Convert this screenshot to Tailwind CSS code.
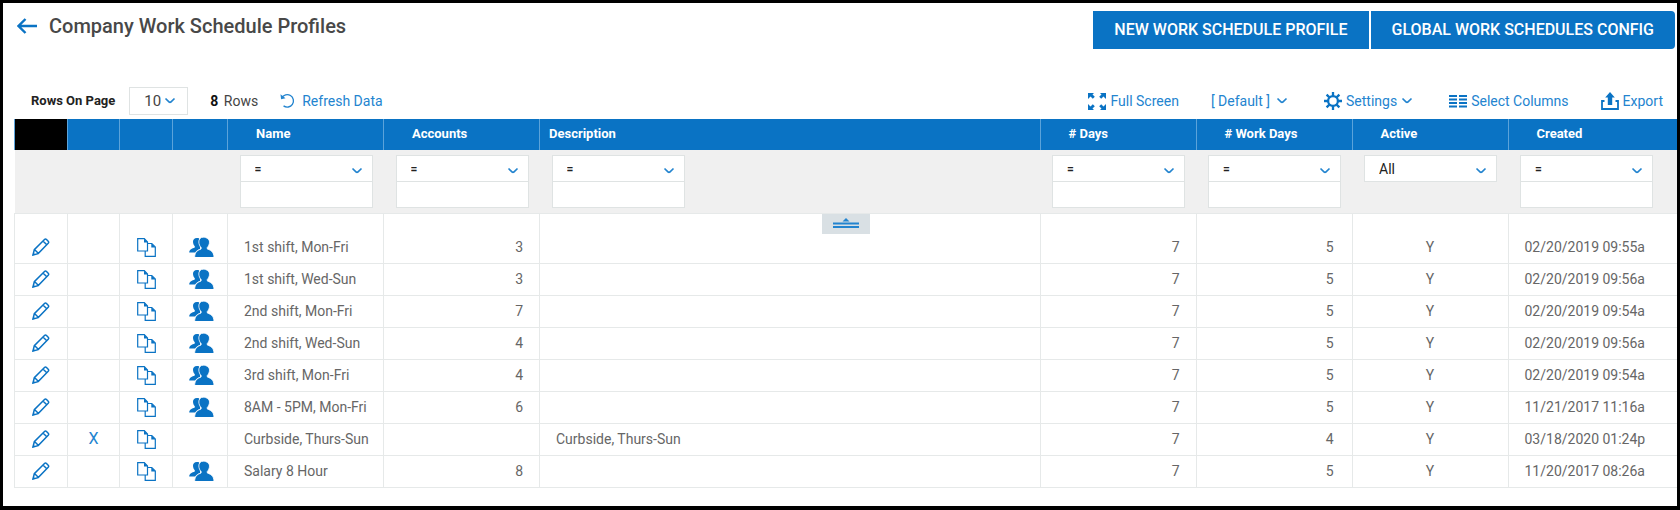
<!DOCTYPE html>
<html lang="en">

<head>
  <meta charset="UTF-8">
  <meta name="viewport" content="width=device-width, initial-scale=1.0">
  <title>Company Work Schedule Profiles</title>
  <script src="https://cdn.jsdelivr.net/npm/@tailwindcss/browser@4"></script>
</head>

<body class="bg-white font-[Roboto,sans-serif] text-sm text-[#666]">
  <!-- icon sprite -->
  <svg class="hidden" xmlns="http://www.w3.org/2000/svg">
    <symbol id="i-chevron" viewBox="0 0 12 8">
      <path d="M1.500 1.500 5.200 5q.8.600 1.600 0l3.700-3.500" fill="none" stroke="currentColor" stroke-width="1.700" />
    </symbol>
    <symbol id="i-back" viewBox="0 0 20 16">
      <path d="M20 8H2M8.500 1 1.500 8l7 7" fill="none" stroke="currentColor" stroke-width="2.400" />
    </symbol>
    <symbol id="i-refresh" viewBox="0 0 18 18">
      <path d="M2 5.500A7 7 0 1 1 4 14.500" fill="none" stroke="currentColor" stroke-width="1.500" />
      <path d="M.5 1.500 1.200 7l5-1.200z" fill="currentColor" />
    </symbol>
    <symbol id="i-expand" viewBox="0 0 18 18">
      <path d="M0 1h6L4.500 2.500 6.800 4.800 4.800 6.800 2.500 4.500 0 7zM18 1v6l-2.500-2.500-2.300 2.300-2-2 2.300-2.300L12 1zM0 18v-6l2.500 2.500 2.300-2.300 2 2-2.300 2.300L6 18zM18 18h-6l1.500-1.500-2.300-2.300 2-2 2.300 2.300L18 12z" fill="currentColor" />
    </symbol>
    <symbol id="i-gear" viewBox="0 0 18 18">
      <circle cx="9" cy="9" r="4.900" fill="none" stroke="currentColor" stroke-width="2.300" />
      <path d="M9 0v4M9 14v4M0 9h4M14 9h4M2.600 2.600l2.800 2.800M12.600 12.600l2.800 2.800M2.600 15.400l2.800-2.800M12.600 5.400l2.800-2.800" stroke="currentColor" stroke-width="2.300" />
    </symbol>
    <symbol id="i-columns" viewBox="0 0 18 14">
      <path d="M0 2h8M10 2h8M0 5.500h8M10 5.500h8M0 9h8M10 9h8M0 12.500h8M10 12.500h8" stroke="currentColor" stroke-width="1.800" />
    </symbol>
    <symbol id="i-export" viewBox="0 0 18 18">
      <path d="M3.500 9H1v8h16V9h-2.500" fill="none" stroke="currentColor" stroke-width="1.800" />
      <path d="M9 0l4.800 5.500H11.200V13H6.800V5.500H4.200z" fill="currentColor" />
    </symbol>
    <symbol id="i-pencil" viewBox="0 0 18 18">
      <path d="M1 17l1.300-5.300L12.500 1.500q1-1 2 0l1.700 1.700q1 1 0 2L6.200 15.600zM2.500 11.500l4 4M11 3l4 4" fill="none" stroke="currentColor" stroke-width="1.500" />
      <path d="M.5 17.500l.8-3 2.200 2.200z" fill="currentColor" />
    </symbol>
    <symbol id="i-copy" viewBox="0 0 19 19">
      <path d="M6.500 13H.7V.7h6.600L10.500 4v9zM10.500 5.500h4.300l3.500 3.500v9.300H8.200V13" fill="none" stroke="currentColor" stroke-width="1.200" />
      <path d="M7 .5V4.500h4zM14.300 5.500v4h4z" fill="currentColor" />
    </symbol>
    <symbol id="i-people" viewBox="0 0 25 20">
      <path d="M10 1.200C6 .2 3.800 2 4 5c.2 2.200 1 3.500 1.800 4.300v1.200C3 11.700.5 12 .2 15.500h6c1-2 3-2.800 5-3.600z" fill="currentColor" />
      <path d="M14.300.2c-2.800 0-4.600 2-4.500 4.800.1 2.300 1 4.300 2.300 5.400v1.600C9.500 13.200 6 13.500 5.600 20.500h19.400c-.2-6.500-4-7.300-6.700-8.500v-1.600c1.200-1.100 2.100-3.100 2.200-5.400C20.600 2.200 17.100.2 14.300.2z" fill="currentColor" stroke="#fff" stroke-width=".8" />
    </symbol>
  </svg>

  <div class="min-h-screen border-3 border-b-4 border-black bg-white">
    <header class="flex items-start justify-between pt-2 pr-0.5 pl-3.5">
      <div class="flex items-center gap-3 pt-px">
        <a href="#" aria-label="Back" class="text-[#0a73c4]"><svg class="h-4 w-5"><use href="#i-back" /></svg></a>
        <h1 class="text-xl leading-7 font-medium text-[#484848]">Company Work Schedule Profiles</h1>
      </div>
      <div class="flex gap-0.5">
        <button type="button" class="h-[38px] bg-[#0a73c4] px-[21px] text-base font-medium text-white">NEW WORK SCHEDULE PROFILE</button>
        <button type="button" class="h-[38px] rounded-r-sm bg-[#0a73c4] px-[21px] text-base font-medium text-white">GLOBAL WORK SCHEDULES CONFIG</button>
      </div>
    </header>

    <div class="mt-[38px] flex h-8 items-center justify-between pr-3.5 pb-1 pl-7">
      <div class="flex items-center">
        <label for="rows-on-page" class="text-[13px] font-bold text-[#222]">Rows On Page</label>
        <div class="relative ml-3.5">
          <select id="rows-on-page" class="h-7 w-[59px] appearance-none border border-[#dfe3e3] bg-white pl-3.5 text-[15px] leading-4 text-[#444]">
            <option>10</option>
          </select>
          <svg class="pointer-events-none absolute top-2.5 right-3 h-2 w-3 text-[#2384cf]"><use href="#i-chevron" /></svg>
        </div>
        <p class="ml-[22px] text-[#444]"><b class="mr-0.5 text-[#111]">8</b> Rows</p>
        <button type="button" class="ml-[22px] flex items-center gap-1.5 text-[#2384cf]"><svg class="size-4"><use href="#i-refresh" /></svg>Refresh Data</button>
      </div>
      <div class="flex items-center text-[#2384cf]">
        <button type="button" class="flex items-center gap-1"><svg class="size-[18px] text-[#0a73c4]"><use href="#i-expand" /></svg>Full Screen</button>
        <button type="button" class="ml-8 flex items-center gap-1.5">[ Default ]<svg class="h-2 w-3"><use href="#i-chevron" /></svg></button>
        <button type="button" class="ml-9 flex items-center gap-1"><svg class="size-[18px] text-[#0a73c4]"><use href="#i-gear" /></svg>Settings<svg class="h-2 w-3"><use href="#i-chevron" /></svg></button>
        <button type="button" class="ml-9 flex items-center gap-1"><svg class="h-3.5 w-[18px] text-[#0a73c4]"><use href="#i-columns" /></svg>Select Columns</button>
        <button type="button" class="ml-8 flex items-center gap-1"><svg class="size-[18px] text-[#0a73c4]"><use href="#i-export" /></svg>Export</button>
      </div>
    </div>

    <div class="relative ml-[11px]">
      <table class="w-full table-fixed border-collapse">
        <colgroup>
          <col class="w-[53px]">
          <col class="w-[52px]">
          <col class="w-[53px]">
          <col class="w-[55px]">
          <col class="w-[156px]">
          <col class="w-[156px]">
          <col>
          <col class="w-[156px]">
          <col class="w-[156px]">
          <col class="w-[156px]">
          <col class="w-[169px]">
        </colgroup>
        <thead>
          <tr class="h-[31px] bg-[#0a73c4] text-left text-[13px] text-white [&>*]:border-l [&>*]:border-[#5ba3da] [&>th]:pl-7 [&>th]:font-bold">
            <td class="bg-black"></td>
            <td></td>
            <td></td>
            <td></td>
            <th scope="col">Name</th>
            <th scope="col">Accounts</th>
            <th scope="col" class="pl-[9px]!">Description</th>
            <th scope="col"># Days</th>
            <th scope="col"># Work Days</th>
            <th scope="col">Active</th>
            <th scope="col">Created</th>
          </tr>
          <tr id="filters" class="h-[63px] bg-[#f0f0f0] align-top">
            <td colspan="4"></td>
          </tr>
        </thead>
        <tbody id="profiles" class="[&_td]:border [&_td]:border-[#e6e9e9] [&_td]:px-4 [&_td]:whitespace-nowrap"></tbody>
      </table>
      <button type="button" aria-label="Collapse filters" class="absolute top-[95px] left-1/2 flex h-5 w-12 -translate-x-1/2 justify-center bg-[#d9e0e4] pt-1 text-[#2384cf]">
        <svg class="h-2.5 w-[26px]" viewBox="0 0 26 10"><path d="M0 5.500h26M0 9h26" stroke="currentColor" stroke-width="1.800" /><path d="M13 0l3.500 3.500h-7z" fill="currentColor" /></svg>
      </button>
    </div>
  </div>

  <script>
    const filters = ['Name', 'Accounts', 'Description', '# Days', '# Work Days', 'Active', 'Created'];

    // name, accounts, description, days, work days, active, created
    const profiles = [
      ['1st shift, Mon-Fri', '3', '', '7', '5', 'Y', '02/20/2019 09:55a'],
      ['1st shift, Wed-Sun', '3', '', '7', '5', 'Y', '02/20/2019 09:56a'],
      ['2nd shift, Mon-Fri', '7', '', '7', '5', 'Y', '02/20/2019 09:54a'],
      ['2nd shift, Wed-Sun', '4', '', '7', '5', 'Y', '02/20/2019 09:56a'],
      ['3rd shift, Mon-Fri', '4', '', '7', '5', 'Y', '02/20/2019 09:54a'],
      ['8AM - 5PM, Mon-Fri', '6', '', '7', '5', 'Y', '11/21/2017 11:16a'],
      ['Curbside, Thurs-Sun', '', 'Curbside, Thurs-Sun', '7', '4', 'Y', '03/18/2020 01:24p'],
      ['Salary 8 Hour', '8', '', '7', '5', 'Y', '11/20/2017 08:26a'],
    ];

    document.getElementById('filters').insertAdjacentHTML('beforeend', filters.map(name => `
      <td class="pt-[5px] pl-3">
        <div class="relative w-[133px]">
          <select aria-label="${name} filter" class="block h-[27px] w-full appearance-none border border-[#dfe3e3] bg-white pl-3.5 text-[#222] ${name === 'Active' ? 'text-sm' : 'text-xs font-bold'}">
            <option>${name === 'Active' ? 'All' : '='}</option>
          </select>
          <svg class="pointer-events-none absolute top-3 right-2.5 h-2 w-3 text-[#2384cf]"><use href="#i-chevron" /></svg>
          ${name === 'Active' ? '' : `<input type="text" aria-label="${name} value" class="-mt-px block h-[27px] w-full border border-[#dfe3e3] bg-white px-3">`}
        </div>
      </td>`).join(''));

    document.getElementById('profiles').innerHTML = profiles.map(([name, accounts, description, days, workDays, active, created]) => `
      <tr class="h-8 first:h-[50px] first:[&>td]:pt-[18px]">
        <td><button type="button" aria-label="Edit" class="mx-auto block text-[#0a73c4]"><svg class="size-[18px]"><use href="#i-pencil" /></svg></button></td>
        <td>${accounts ? '' : '<button type="button" aria-label="Delete" class="mx-auto block text-base leading-5 text-[#2384cf]">X</button>'}</td>
        <td><button type="button" aria-label="Copy" class="mx-auto block text-[#0a73c4]"><svg class="size-[19px]"><use href="#i-copy" /></svg></button></td>
        <td>${accounts ? '<button type="button" aria-label="Accounts" class="block text-[#0a73c4]"><svg class="h-5 w-[25px]"><use href="#i-people" /></svg></button>' : ''}</td>
        <td>${name}</td>
        <td class="text-right">${accounts}</td>
        <td>${description}</td>
        <td class="text-right">${days}</td>
        <td class="pr-[18px]! text-right">${workDays}</td>
        <td class="text-center">${active}</td>
        <td class="border-r-0!">${created}</td>
      </tr>`).join('');
  </script>
</body>

</html>
